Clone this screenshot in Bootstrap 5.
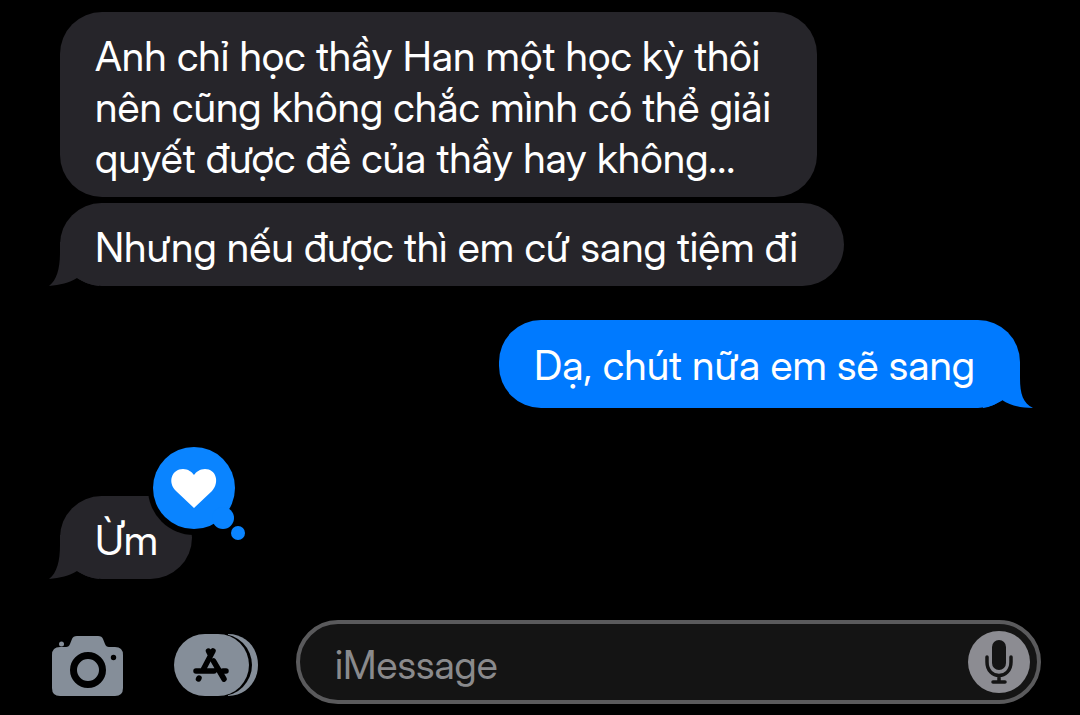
<!DOCTYPE html>
<html lang="vi">
<head>
<meta charset="utf-8">
<meta name="viewport" content="width=device-width, initial-scale=1">
<title>iMessage</title>
<link href="https://cdn.jsdelivr.net/npm/bootstrap@5.3.0/dist/css/bootstrap.min.css" rel="stylesheet">
<style>
  body { background: #000; color: #fff; font-family: "Inter Display", Inter, Roboto, "Liberation Sans", sans-serif; }
  .thread { padding: 12px 60px 0; font-size: 41px; line-height: 51px; }
  .bubble { position: relative; max-width: 85%; padding: 19px 46px 13px 35px; border-radius: 42px; background: #26252a; }
  .bubble-out { background: #007aff; padding: 20px 45px 17px 35px; margin-top: 34px; }
  .follow { margin-top: 6px; }
  .tail { position: absolute; bottom: 0; width: 50px; height: 44px; fill: #26252a; }
  .tail-in { left: -11px; }
  .tail-out { right: -13px; fill: #007aff; }
  .tapback { position: absolute; left: 88px; top: -53px; width: 104px; height: 104px; }
  .short { padding-right: 34px; margin-top: 88px; }
  .composer { padding: 41px 39px 11px 52px; }
  .icon-btn { padding: 0; border: 0; background: none; line-height: 0; }
  .composer > .icon-btn { padding-top: 6px; }
  .apps { margin: 0 38px 0 50px; }
  .field { height: 84px; border: 4px solid #5a5a5c; border-radius: 42px; background: #141414; padding: 0 7px 0 35px; }
  .field input { min-width: 0; border: 0; outline: 0; padding: 4px 0 0; background: none; color: #fff; font-size: 39px; line-height: 51px; }
  .field input::placeholder { color: #8a8a8c; opacity: 1; }
</style>
</head>
<body>
<main class="thread d-flex flex-column align-items-start">
  <div class="bubble">Anh chỉ học thầy Han một học kỳ thôi<br>nên cũng không chắc mình có thể giải<br>quyết được đề của thầy hay không...</div>
  <div class="bubble follow">
    <svg class="tail tail-in" viewBox="0 0 50 44" aria-hidden="true"><path d="M11 0V10C11 26 8 38 0 44C11 43 20 41 28 36C34 40 42 43 50 44V0Z"/></svg>
    <span class="position-relative">Nhưng nếu được thì em cứ sang tiệm đi</span>
  </div>
  <div class="bubble bubble-out align-self-end">
    <svg class="tail tail-out" viewBox="0 0 50 44" aria-hidden="true"><path d="M37 0V14C37 30 40 39 50 44C39 44 28 42 19 36C13 40 7 43 0 44V0Z"/></svg>
    <span class="position-relative">Dạ, chút nữa em sẽ sang</span>
  </div>
  <div class="bubble short">
    <svg class="tail tail-in" viewBox="0 0 50 44" aria-hidden="true"><path d="M11 0V10C11 26 8 38 0 44C11 43 20 41 28 36C34 40 42 43 50 44V0Z"/></svg>
    <span class="position-relative">Ừm</span>
    <svg class="tapback" viewBox="0 0 104 104" role="img" aria-label="Loved">
      <circle cx="46" cy="46" r="46"/>
      <g fill="#0a84ff"><circle cx="46" cy="45" r="41"/><circle cx="75" cy="75" r="11"/><circle cx="90" cy="90" r="7"/></g>
      <path fill="#fff" d="M46 65L28 48C19 39 24 26 35 26C40 26 44 29 46 32C48 29 52 26 57 26C68 26 72 39 64 48Z"/>
    </svg>
  </div>
</main>
<footer class="composer d-flex align-items-center">
  <button class="icon-btn" type="button" aria-label="Camera">
    <svg width="72" height="62" viewBox="0 0 72 62">
      <path fill="#858e99" d="M8 13H14Q17 13 18 10L20 5Q21 2 25 2H46Q50 2 51 5L53 10Q54 13 57 13H63Q71 13 71 21V54Q71 62 63 62H8Q0 62 0 54V21Q0 13 8 13Z"/>
      <circle cx="9.500" cy="10" r="2.500" fill="#858e99"/>
      <circle cx="36" cy="36" r="14.500" fill="#858e99" stroke="#000" stroke-width="7"/>
      <circle cx="61.500" cy="23.500" r="2.700"/>
    </svg>
  </button>
  <button class="icon-btn apps" type="button" aria-label="Apps">
    <svg width="84" height="62" viewBox="0 0 84 62">
      <path fill="#858e99" d="M54 0C72 0 84 14 84 31S72 62 54 62Z"/>
      <rect x="8" width="70" height="62" rx="31"/>
      <rect width="75" height="62" rx="31" fill="#858e99"/>
      <g stroke="#000" stroke-width="5.500" stroke-linecap="round" fill="none">
        <path d="M39 17L29 36M34.500 17L36.500 21M22 37H40M49 37H52M39.500 27L50 45M25 44L24.500 45"/>
      </g>
    </svg>
  </button>
  <div class="field d-flex align-items-center flex-grow-1">
    <input class="flex-grow-1" type="text" placeholder="iMessage" aria-label="iMessage">
    <button class="icon-btn" type="button" aria-label="Dictate">
      <svg width="62" height="62" viewBox="0 0 62 62">
        <circle cx="31" cy="31" r="31" fill="#8c8c92"/>
        <rect x="24" y="9" width="14" height="30" rx="7" fill="#141414"/>
        <path fill="none" stroke="#141414" stroke-width="3.500" stroke-linecap="round" d="M19 26V31C19 49 43 49 43 31V26M31 45V51M25 51H37"/>
      </svg>
    </button>
  </div>
</footer>
<script src="https://cdn.jsdelivr.net/npm/bootstrap@5.3.0/dist/js/bootstrap.bundle.min.js"></script>
</body>
</html>
